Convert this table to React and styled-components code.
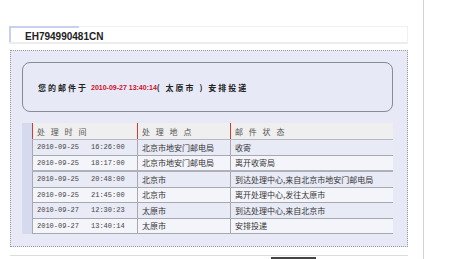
import React from 'react';
import styled, { createGlobalStyle } from 'styled-components';

const rows = [
  ['2010-09-25', '16:26:00', '北京市地安门邮电局', '收寄'],
  ['2010-09-25', '18:17:00', '北京市地安门邮电局', '离开收寄局'],
  ['2010-09-25', '20:48:00', '北京市', '到达处理中心,来自北京市地安门邮电局'],
  ['2010-09-25', '21:45:00', '北京市', '离开处理中心,发往太原市'],
  ['2010-09-27', '12:30:23', '太原市', '到达处理中心,来自北京市'],
  ['2010-09-27', '13:40:14', '太原市', '安排投递'],
];

const App = () => {
  return (
    <Page>
      <GlobalStyle />
      <Main>
        <TitleBar>
          <TitleText>EH794990481CN</TitleText>
        </TitleBar>
        <DashBox>
          <Notice>
            <span>您的邮件于</span>
            <RedTime>2010-09-27 13:40:14</RedTime>
            <span>( 太原市 ) 安排投递</span>
          </Notice>
          <TableWrap>
            <Shadow />
            <Table>
              <thead>
                <tr>
                  <Th $w={100}>处 理 时 间</Th>
                  <Th $w={88}>处 理 地 点</Th>
                  <Th>邮 件 状 态</Th>
                </tr>
              </thead>
              <tbody>
                {rows.map((r, i) => (
                  <Tr key={i} $alt={i % 2 === 1} $thick={i === 2}>
                    <TimeTd>
                      <DateTxt>{r[0]}</DateTxt>
                      {r[1]}
                    </TimeTd>
                    <Td>{r[2]}</Td>
                    <Td>{r[3]}</Td>
                  </Tr>
                ))}
              </tbody>
            </Table>
          </TableWrap>
        </DashBox>
        <BottomLine>
          <Slider />
        </BottomLine>
      </Main>
      <Divider />
    </Page>
  );
};

export default App;

const GlobalStyle = createGlobalStyle`
  body {
    margin: 0;
    background: #fff;
    font-family: "Noto Sans CJK SC", "Liberation Sans", sans-serif;
  }
`;

const Page = styled.div`
  display: flex;
  height: 259px;
  overflow: hidden;
`;

const Main = styled.div`
  width: 399px;
  margin-left: 9px;
  padding-top: 26px;
`;

const Divider = styled.div`
  width: 1px;
  background: #d4d4d4;
  margin-left: 15px;
  height: 259px;
`;

const TitleBar = styled.div`
  position: relative;
  height: 15px;
  border: 1px solid #f0f0f0;
  border-bottom: 2px solid #ececec;
  display: flex;
  align-items: center;
  &::before {
    content: '';
    position: absolute;
    left: -1px;
    top: -1px;
    width: 68px;
    height: 14px;
    border-top: 2px solid #c9d0ee;
    border-left: 2px solid #c9d0ee;
  }
`;

const TitleText = styled.div`
  font-family: "Liberation Sans", Arial, sans-serif;
  font-weight: bold;
  font-size: 10px;
  color: #222;
  padding-left: 15px;
  padding-top: 3px;
`;

const DashBox = styled.div`
  margin-top: 6px;
  margin-left: 1px;
  border: 1px dotted #9a9a9a;
  background: #e7e9f7;
  padding: 11px 14px 12px 11px;
`;

const Notice = styled.div`
  height: 48px;
  border: 1px solid #8a8a94;
  border-radius: 8px;
  display: flex;
  align-items: center;
  padding-left: 15px;
  font-size: 8px;
  font-weight: bold;
  color: #222;
  letter-spacing: 2px;
`;

const RedTime = styled.span`
  font-family: "Liberation Sans", Arial, sans-serif;
  color: #d0102a;
  font-size: 7px;
  letter-spacing: 0;
  margin: 0 0 0 3px;
`;

const TableWrap = styled.div`
  display: flex;
  margin-top: 11px;
`;

const Shadow = styled.div`
  width: 10px;
  background: #d6daef;
`;

const Table = styled.table`
  flex: 1;
  border-collapse: collapse;
  font-size: 8px;
  color: #333;
`;

const Th = styled.th`
  width: ${({ $w }) => ($w ? `${$w}px` : 'auto')};
  height: 16px;
  background: #efefef;
  border-left: 1px solid #d33a3a;
  text-align: left;
  font-weight: normal;
  color: #555;
  padding: 0 0 0 4px;
  letter-spacing: 2px;
  border-bottom: 1px solid #b8b8c0;
`;

const Tr = styled.tr`
  background: ${({ $alt }) => ($alt ? '#f4f5fb' : '#e8eaf6')};
  border-top: ${({ $thick }) => ($thick ? '2px solid #b0b0b8' : 'none')};
  border-bottom: 1px solid #a8a8b0;
`;

const Td = styled.td`
  height: 14.5px;
  padding: 0 0 0 4px;
  border-left: 1px solid #a8a8b0;
  white-space: nowrap;
  font-size: 8px;
`;

const TimeTd = styled(Td)`
  font-family: "Liberation Mono", monospace;
  font-size: 7px;
  color: #444;
`;

const DateTxt = styled.span`
  display: inline-block;
  width: 54px;
`;

const BottomLine = styled.div`
  margin-top: 8px;
  margin-left: 1px;
  height: 1px;
  background: #dcdcdc;
  position: relative;
`;

const Slider = styled.div`
  position: absolute;
  left: 261px;
  top: 2px;
  width: 45px;
  height: 2px;
  background: #444;
`;
